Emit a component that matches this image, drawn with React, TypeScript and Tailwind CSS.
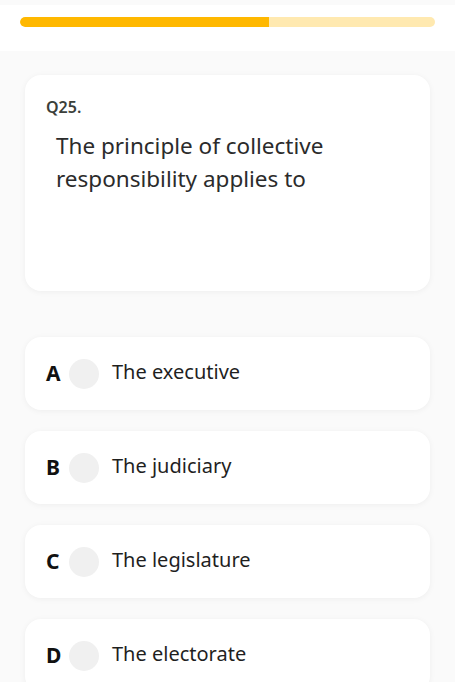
import * as React from "react"

interface Option {
  key: string
  label: string
}

const options: Option[] = [
  { key: "A", label: "The executive" },
  { key: "B", label: "The judiciary" },
  { key: "C", label: "The legislature" },
  { key: "D", label: "The electorate" },
]

const progress = 60

export default function App() {
  const [selected, setSelected] = React.useState<string | null>(null)

  return (
    <div
      className="min-h-screen bg-[#fafafa] pt-[5px]"
      style={{ fontFamily: '"Noto Sans", "Open Sans", sans-serif' }}
    >
      {/* Progress header */}
      <div className="bg-white h-[46px] px-5 pt-3">
        <div className="h-[10px] w-full rounded-full bg-[#ffe9b0] overflow-hidden">
          <div className="h-full bg-[#ffb800] rounded-l-full" style={{ width: `${progress}%` }} />
        </div>
      </div>

      <div className="px-[25px] pt-6">
        {/* Question card */}
        <div className="bg-white rounded-2xl shadow-[0_1px_6px_rgba(0,0,0,0.05)] h-[216px] pl-[21px] pr-5 pt-[22px]">
          <div className="text-[16px] font-semibold text-[#3b3f3a] leading-5">Q25.</div>
          <p className="mt-[12px] pl-[10px] text-[22.5px] leading-[33px] text-[#2b2b2b] pr-10">
            The principle of collective responsibility applies to
          </p>
        </div>

        {/* Answer options */}
        <div className="mt-[46px] flex flex-col gap-[21px]">
          {options.map((opt) => (
            <button
              key={opt.key}
              onClick={() => setSelected(opt.key)}
              className="bg-white rounded-2xl shadow-[0_1px_6px_rgba(0,0,0,0.05)] h-[73px] flex items-center pl-[21px] text-left"
            >
              <span className="w-[23px] text-[21px] font-bold text-[#111] leading-none">{opt.key}</span>
              <span
                className={
                  selected === opt.key
                    ? "w-[30px] h-[30px] rounded-full bg-[#ffb800]"
                    : "w-[30px] h-[30px] rounded-full bg-[#f0f0f0]"
                }
              />
              <span className="ml-[13px] text-[20px] text-[#1f1f1f] leading-none -mt-[3px]">{opt.label}</span>
            </button>
          ))}
        </div>
      </div>
    </div>
  )
}
